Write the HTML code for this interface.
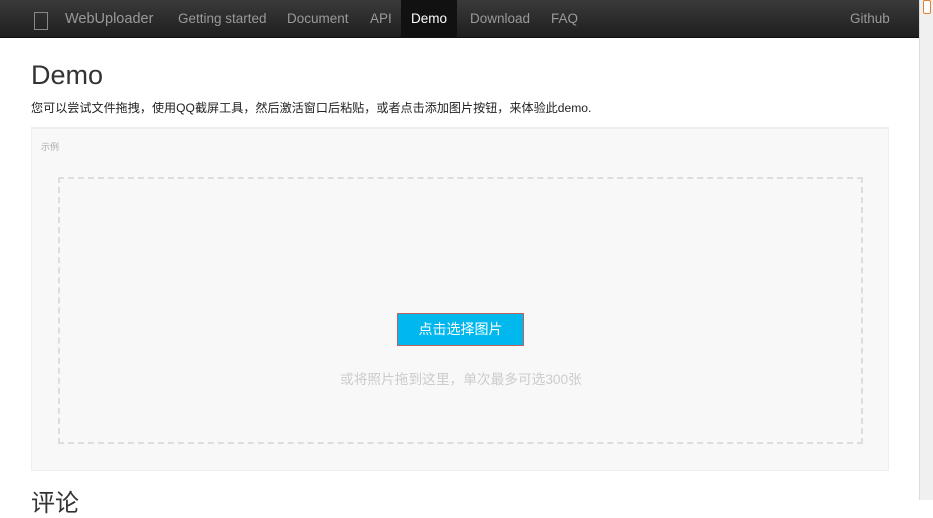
<!DOCTYPE html>
<html><head><meta charset="utf-8"><style>
*{margin:0;padding:0;box-sizing:border-box}
body{width:933px;height:500px;overflow:hidden;background:#fff;font-family:"Liberation Sans","Noto Sans CJK SC",sans-serif;position:relative}
.nav{position:absolute;left:0;top:0;width:919px;height:38px;background:linear-gradient(#3a3a3a,#1e1e1e);border-bottom:1px solid #111}
.nav span{position:absolute;top:0;line-height:38px;font-size:13.5px;color:#999}
.logo{position:absolute;left:34px;top:12px;width:14px;height:18px;border:1px solid #888}
.active{background:#111;color:#fff!important;padding:0 10px}
.sb{position:absolute;left:919px;top:0;width:14px;height:500px;background:#f0f0f0;border-left:1px solid #ddd}
.sb div{position:absolute;left:3px;top:0;width:8px;height:14px;background:#fff;border:1px solid #e08030;border-radius:2px}
h1{position:absolute;left:31px;top:60px;font-size:27px;font-weight:normal;color:#333}
.p{position:absolute;left:31px;top:99px;font-size:12.1px;color:#222}
.box{position:absolute;left:31px;top:127px;width:858px;height:344px;background:#f8f8f8;border:1px solid #eee;border-top:2px solid #eee}
.lbl{position:absolute;left:41px;top:140px;font-size:9px;color:#aaa}
.dz{position:absolute;left:58px;top:177px;width:805px;height:267px;border:2px dashed #ddd}
.btn{position:absolute;left:397px;top:313px;width:127px;height:33px;background:#00b7ee;border:1px solid #c0625a;color:#fff;font-size:14px;text-align:center;line-height:31px}
.hint{position:absolute;left:340px;top:368px;font-size:13.7px;color:#ccc}
.h2{position:absolute;left:31px;top:483px;font-size:24px;color:#333}
</style></head><body>
<div class="nav">
<div class="logo"></div>
<span style="left:65px;font-size:14.5px">WebUploader</span>
<span style="left:178px">Getting started</span>
<span style="left:287px">Document</span>
<span style="left:370px">API</span>
<span class="active" style="left:401px">Demo</span>
<span style="left:470px">Download</span>
<span style="left:551px">FAQ</span>
<span style="left:850px">Github</span>
</div>
<div class="sb"><div></div></div>
<h1>Demo</h1>
<div class="p">您可以尝试文件拖拽，使用QQ截屏工具，然后激活窗口后粘贴，或者点击添加图片按钮，来体验此demo.</div>
<div class="box"></div>
<div class="lbl">示例</div>
<div class="dz"></div>
<div class="btn">点击选择图片</div>
<div class="hint">或将照片拖到这里，单次最多可选300张</div>
<div class="h2">评论</div>
</body></html>
